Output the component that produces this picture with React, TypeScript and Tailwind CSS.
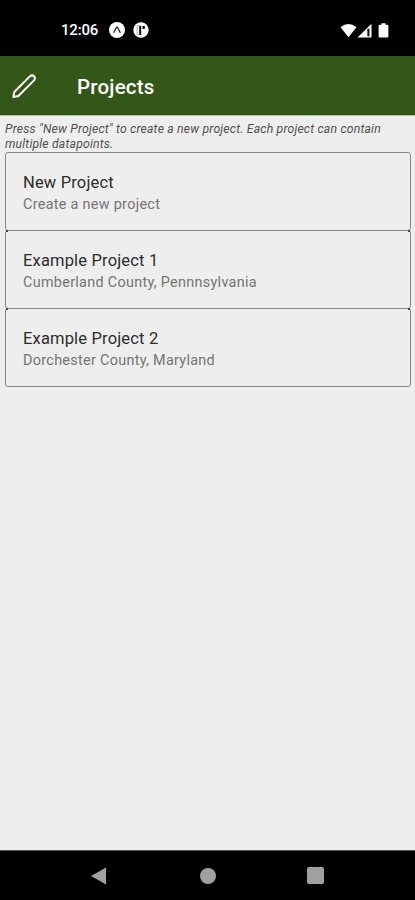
interface Project {
  name: string;
  detail: string;
}

const projects: Project[] = [
  { name: 'New Project', detail: 'Create a new project' },
  { name: 'Example Project 1', detail: 'Cumberland County, Pennnsylvania' },
  { name: 'Example Project 2', detail: 'Dorchester County, Maryland' },
];

function StatusBar() {
  return (
    <div className="flex h-14 shrink-0 items-center bg-black pt-1 pr-[26px] pl-[61px] text-white">
      <span className="w-[48px] text-[15px] font-medium tracking-[-0.2px] whitespace-nowrap">12:06</span>
      {/* Expo */}
      <svg className="h-4 w-4" viewBox="0 0 16 16">
        <circle cx="8" cy="8" r="8" fill="#fff" />
        <path d="M4.7 10.8L7.2 5.8Q8 4.6 8.8 5.8L11.3 10.8" fill="none" stroke="#222" strokeWidth="1.3" />
      </svg>
      <svg className="ml-2 h-4 w-4" viewBox="0 0 16 16">
        <circle cx="8" cy="8" r="7.7" fill="#fff" />
        <path d="M5.8 3.6H4.1V12.4H5.8" fill="none" stroke="#888" strokeWidth="0.7" />
        <path d="M6.2 3.8H8.2V13H6.2zM9.5 4.1H11.8V7H9.5z" fill="#111" />
      </svg>
      <div className="flex-1" />
      <svg className="h-[15px] w-[17px]" viewBox="0 0 17 15">
        <path d="M0.5 4.2Q8.5 -2.3 16.5 4.2L8.5 14.3Z" fill="#fff" />
      </svg>
      <svg className="h-[15px] w-[15px]" viewBox="0 0 15 15">
        <path d="M0.5 14.5L14.5 0.7V14.5Z" fill="#fff" />
        <path d="M10.4 5.8H13V13.3H10.4z" fill="#000" />
        <path d="M11.9 5.8H13V13.3H11.9z" fill="#999" />
      </svg>
      <svg className="ml-[6px] h-[15px] w-[11px]" viewBox="0 0 11 15">
        <path d="M3.5 0.3H7.5V1.7H9.2Q10.4 1.7 10.4 2.9V13.2Q10.4 14.5 9.2 14.5H1.8Q0.6 14.5 0.6 13.2V2.9Q0.6 1.7 1.8 1.7H3.5Z" fill="#fff" />
      </svg>
    </div>
  );
}

function Header() {
  return (
    <header className="flex h-[59px] shrink-0 items-center border-b border-[#25490f] bg-[#335718] pl-3 text-white">
      <svg className="mt-px h-[26px] w-[26px]" viewBox="0 0 26 26" fill="none" stroke="#fff" strokeWidth="2" strokeLinejoin="round">
        <path d="M1.4 24L2.3 19L17.8 3.4Q20 1.4 22 3.2Q23.8 5.2 22 7.4L6.4 23Z" />
      </svg>
      <h1 className="ml-[39px] pt-1 text-[20.5px] font-medium tracking-[0.2px]">Projects</h1>
    </header>
  );
}

function ProjectRow({ project }: { project: Project }) {
  return (
    <li className="relative -mt-px flex h-[79px] flex-col rounded-[3px] border border-[#858883] pt-[18px] pl-[17px] not-first:before:absolute not-first:before:-top-px not-first:before:left-0 not-first:before:h-0.5 not-first:before:w-0.5 not-first:before:bg-[#1f651f] not-first:after:absolute not-first:after:-top-px not-first:after:right-0 not-first:after:h-0.5 not-first:after:w-0.5 not-first:after:bg-[#1f651f]">
      <span className="text-[16.5px] leading-[23px] tracking-[0.17px] text-[#2c2c2c]">{project.name}</span>
      <span className="pt-px text-[14.4px] leading-5 tracking-[0.3px] text-[#747474]">{project.detail}</span>
    </li>
  );
}

export default function App() {
  return (
    <div className="flex h-[900px] w-[415px] flex-col overflow-hidden bg-[#eeeeee] font-['Roboto',sans-serif]">
      <StatusBar />
      <Header />
      <main className="flex-1 border-t border-[#b4c9aa] pr-1 pl-[5px]">
        <p className="pt-[6px] text-[12.2px] leading-[15px] tracking-[0.19px] whitespace-nowrap text-[#505050] italic">
          Press "New Project" to create a new project. Each project can contain
          <br />
          multiple datapoints.
        </p>
        <ul className="mt-px">
          {projects.map((project) => (
            <ProjectRow key={project.name} project={project} />
          ))}
        </ul>
      </main>
      <nav className="flex h-[50px] shrink-0 items-center border-t border-[#555] bg-black pl-[90px]">
        <svg className="h-[18px] w-[17px]" viewBox="0 0 17 18">
          <path d="M1 9L16 0.5V17.5Z" fill="#a0a0a0" />
        </svg>
        <div className="ml-[93px] h-4 w-4 rounded-full bg-[#a0a0a0]" />
        <div className="ml-[91px] h-[17px] w-[17px] rounded-[2px] bg-[#a0a0a0]" />
      </nav>
    </div>
  );
}
